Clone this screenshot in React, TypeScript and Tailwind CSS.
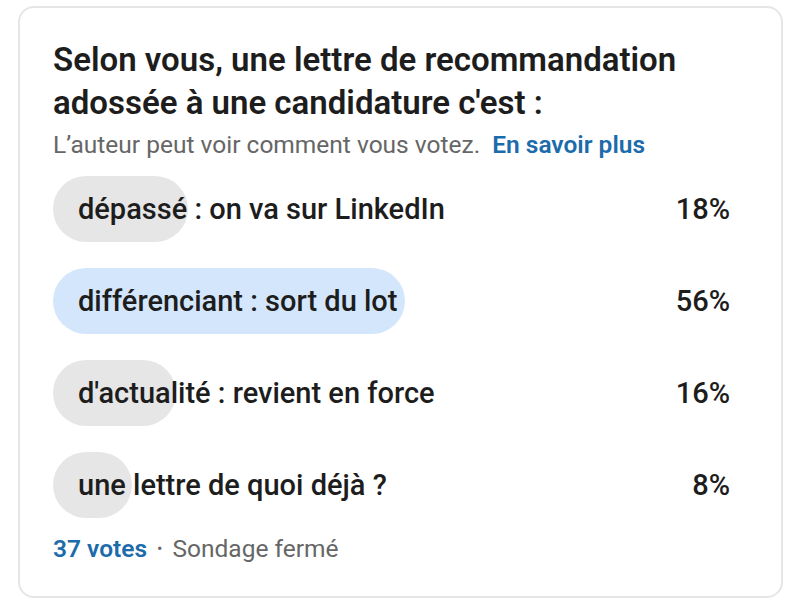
const options = [
  { label: "dépassé : on va sur LinkedIn", pct: 18, width: 135, mine: false },
  { label: "différenciant : sort du lot", pct: 56, width: 352, mine: true },
  { label: "d'actualité : revient en force", pct: 16, width: 123, mine: false },
  { label: "une lettre de quoi déjà ?", pct: 8, width: 79, mine: false },
];

export default function App() {
  return (
    <div className="w-[800px] h-[600px] bg-white pt-[6px] pl-[18px] font-['Roboto',sans-serif]">
      <div className="w-[765px] h-[592px] rounded-[16px] border-2 border-[#e6e6e6] pl-[33px] pr-[51px] pt-[30px]">
        <h2 className="text-[33px] leading-[43px] font-semibold text-[#1d1d1d]">
          Selon vous, une lettre de recommandation adossée à une candidature c'est :
        </h2>
        <p className="mt-[6px] text-[24.5px] leading-[30px] text-[#666666] whitespace-nowrap">
          L’auteur peut voir comment vous votez.{" "}
          <span className="ml-[6px] font-semibold text-[#1c6bab]">En savoir plus</span>
        </p>

        <div className="mt-[16px] flex flex-col gap-[26px]">
          {options.map((o) => (
            <div key={o.label} className="relative h-[66px] flex items-center justify-between">
              <div
                className={`absolute left-0 top-0 h-full rounded-full ${o.mine ? "bg-[#d3e6fb]" : "bg-[#e6e6e6]"}`}
                style={{ width: o.width }}
              />
              <span className="relative pl-[25px] pt-[2px] text-[29px] font-medium text-[#1d1d1d]">{o.label}</span>
              <span className="relative pt-[2px] text-[29px] font-medium text-[#1d1d1d]">{o.pct}%</span>
            </div>
          ))}
        </div>

        <div className="mt-[16px] text-[24.5px] leading-[30px] text-[#666666] flex items-center">
          <span className="font-semibold text-[#1c6bab]">37 votes</span>
          <span className="mx-[10px] text-[16px]">•</span>
          <span>Sondage fermé</span>
        </div>
      </div>
    </div>
  );
}
